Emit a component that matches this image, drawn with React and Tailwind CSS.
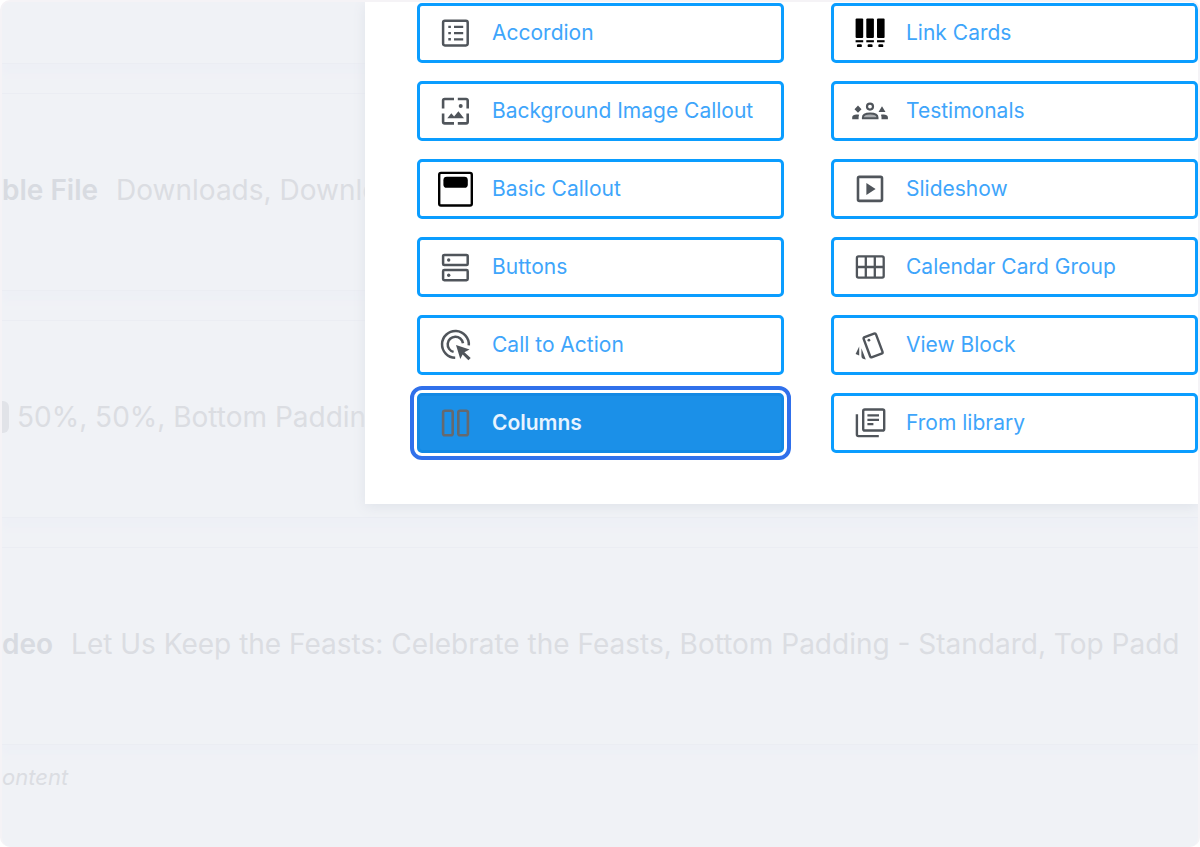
import React, { useState } from "react";

const AccordionIcon = (props) => (
  <svg viewBox="0 0 36 36" fill="none" stroke="currentColor" {...props}>
    <rect x="6.1" y="5.8" width="24.6" height="24.6" rx="1.8" strokeWidth="2.5" />
    <path d="M17 11.9h9.2M17 18.1h9.2M17 24.3h9.2" strokeWidth="2.3" />
    <path d="M11.3 11.9h2.6M11.3 18.1h2.6M11.3 24.3h2.6" strokeWidth="2.4" />
  </svg>
);

const BackgroundImageIcon = (props) => (
  <svg viewBox="0 0 36 36" fill="none" {...props}>
    <path
      d="M6.1 15.4V7.6a1.6 1.6 0 0 1 1.6-1.6H17M20.8 6h8.3a1.6 1.6 0 0 1 1.6 1.6v7.8M30.7 20.4v8.4a1.6 1.6 0 0 1-1.6 1.6h-8.3M17 30.4H7.7a1.6 1.6 0 0 1-1.6-1.6v-8.4"
      stroke="currentColor"
      strokeWidth="2.6"
    />
    <path d="M10.3 25.2l4-5 2.8 3.4 4.3-5.3 5.6 6.9z" fill="currentColor" />
    <circle cx="23.7" cy="13" r="2" fill="currentColor" />
  </svg>
);

const BasicCalloutIcon = (props) => (
  <svg viewBox="0 0 36 36" fill="none" {...props}>
    <rect x="2.2" y="1.9" width="32.6" height="32.6" rx="1.8" stroke="#000" strokeWidth="2.4" />
    <rect x="6.4" y="5.8" width="24.4" height="11" rx="3.4" fill="#000" />
  </svg>
);

const ButtonsIcon = (props) => (
  <svg viewBox="0 0 36 36" fill="none" stroke="currentColor" strokeWidth="2.5" {...props}>
    <rect x="6.1" y="5.9" width="24.6" height="10.2" rx="1.2" />
    <rect x="6.1" y="21.1" width="24.6" height="10.2" rx="1.2" />
    <circle cx="11.7" cy="11" r="1.7" fill="currentColor" stroke="none" />
    <circle cx="11.7" cy="26.2" r="1.7" fill="currentColor" stroke="none" />
  </svg>
);

const CallToActionIcon = (props) => (
  <svg viewBox="0 0 36 36" fill="none" stroke="currentColor" strokeWidth="2.5" {...props}>
    <path d="M31.8 18.4a13.4 13.4 0 1 0-13.6 12.4" />
    <path d="M26 16.2a7.7 7.7 0 1 0-9.4 8.7" />
    <path
      d="M19 18l13.6 4.4-5.2 2.9 6.3 5.8-2.3 2.2-5.8-5.9-2.3 4.6z"
      fill="currentColor"
      stroke="none"
    />
  </svg>
);

const ColumnsIcon = (props) => (
  <svg viewBox="0 0 36 36" fill="none" stroke="currentColor" strokeWidth="2.6" {...props}>
    <rect x="6.1" y="5.8" width="9.6" height="24.4" rx="1.8" />
    <rect x="21.3" y="5.8" width="9.6" height="24.4" rx="1.8" />
  </svg>
);

const LinkCardsIcon = (props) => (
  <svg viewBox="0 0 36 36" fill="#000" {...props}>
    {[4.6, 15.3, 26].map((x) => (
      <g key={x}>
        <rect x={x} y="3.4" width="7.6" height="19.6" rx="1" />
        <rect x={x} y="25.2" width="7.6" height="2.1" />
        <rect x={x + 1.3} y="29.3" width="5" height="2.8" rx="1.2" />
      </g>
    ))}
  </svg>
);

const TestimonialsIcon = (props) => (
  <svg viewBox="0 0 36 36" fill="currentColor" overflow="visible" {...props}>
    <circle cx="19" cy="13.6" r="3" fill="none" stroke="currentColor" strokeWidth="2.2" />
    <path
      d="M11.9 25.3v-.9c0-2.8 3.4-4 7.3-4s7.3 1.2 7.3 4v.9z"
      fill="#a9acb0"
      stroke="currentColor"
      strokeWidth="2"
    />
    <path d="M7 12.6l3.5 3.6L7 19.8l-3.5-3.6zM31 13.2l3.5 5.7h-7z" />
    <path d="M1.2 26.3v-2c0-1.8 2-2.8 4.4-2.8.9 0 1.8.1 2.6.3-.4.7-.6 1.5-.6 2.4v2.1zM36.9 26.3v-2c0-1.8-2-2.8-4.4-2.8-.9 0-1.8.1-2.6.3.4.7.6 1.5.6 2.4v2.1z" />
  </svg>
);

const SlideshowIcon = (props) => (
  <svg viewBox="0 0 36 36" fill="none" stroke="currentColor" strokeWidth="2.6" {...props}>
    <rect x="7" y="5.9" width="24" height="24" rx="1.4" />
    <path d="M15.4 12.1v11.8l9.2-5.9z" fill="currentColor" stroke="none" />
  </svg>
);

const CalendarIcon = (props) => (
  <svg viewBox="0 0 36 36" fill="none" stroke="currentColor" strokeWidth="2.3" {...props}>
    <rect x="5.9" y="7.3" width="26.8" height="21.4" rx="1.6" />
    <path d="M14.8 7.3v21.4M23.8 7.3v21.4M5.9 18h26.8" />
  </svg>
);

const ViewBlockIcon = (props) => (
  <svg viewBox="0 0 36 36" fill="none" stroke="currentColor" strokeWidth="2.4" {...props}>
    <rect x="15.5" y="7.7" width="13.2" height="21.4" rx="1.6" transform="rotate(-20.5 22.1 18.4)" />
    <circle cx="17.9" cy="13.2" r="1.4" fill="currentColor" stroke="none" />
    <path d="M8.2 19.4v9.2l-3.6-1.5zM10.4 21.2l4.4 11.2c-2.9-.1-4.4-1.3-4.4-3.4z" fill="currentColor" stroke="none" />
  </svg>
);

const LibraryIcon = (props) => (
  <svg viewBox="0 0 36 36" fill="none" stroke="currentColor" strokeWidth="2.4" {...props}>
    <rect x="12.2" y="4.5" width="21" height="21" rx="1.6" />
    <path d="M5.9 9.2v20.3a1.6 1.6 0 0 0 1.6 1.6h20.3" />
    <path d="M16.4 10.4H28M16.4 14.8H28M16.4 19.2h6" strokeWidth="2.2" />
  </svg>
);

const BLOCKS = [
  { name: "Accordion", icon: AccordionIcon },
  { name: "Link Cards", icon: LinkCardsIcon },
  { name: "Background Image Callout", icon: BackgroundImageIcon },
  { name: "Testimonals", icon: TestimonialsIcon },
  { name: "Basic Callout", icon: BasicCalloutIcon },
  { name: "Slideshow", icon: SlideshowIcon },
  { name: "Buttons", icon: ButtonsIcon },
  { name: "Calendar Card Group", icon: CalendarIcon },
  { name: "Call to Action", icon: CallToActionIcon },
  { name: "View Block", icon: ViewBlockIcon },
  { name: "Columns", icon: ColumnsIcon },
  { name: "From library", icon: LibraryIcon },
];

const ROW =
  "flex items-center border-y border-[#ebedf3] bg-[#f0f2f6] pt-[78px] pb-[82px] text-[28px] leading-9 whitespace-nowrap shadow-[0_10px_6px_#eef0f6]";

function BlockButton({ block, active, onSelect }) {
  const Icon = block.icon;

  return (
    <button
      type="button"
      onClick={onSelect}
      className={
        active
          ? "flex h-15 items-center gap-[19px] rounded-[5px] border-3 border-[#1389e4] bg-[#1b90e8] px-[17px] text-[21px] font-semibold text-[#e8f4ff] outline-4 outline-offset-3 outline-[#3070eb]"
          : "flex h-15 items-center gap-[19px] rounded-[5px] border-3 border-[#0a9dff] bg-white px-[17px] text-[21px] text-[#3ea5fb]"
      }
    >
      <Icon className={active ? "size-9 shrink-0 text-[#65696f]" : "size-9 shrink-0 text-[#50555b]"} />
      <span className="whitespace-nowrap">{block.name}</span>
    </button>
  );
}

export default function App() {
  const [selected, setSelected] = useState("Columns");

  return (
    <div className="min-h-screen w-full bg-white font-[Inter,sans-serif]">
      <main className="relative min-h-screen overflow-hidden rounded-[10px] border-2 border-b-0 border-[#f5f3f6] bg-[#f0f2f6] text-[#dbdde2]">
        <div className="flex flex-col gap-[29px]">
          <div className="h-[62px] border-b border-[#ebedf3] shadow-[0_10px_6px_#eef0f6]" />

          <div className={ROW}>
            <strong className="font-semibold text-[#d8dbe1]">ble File</strong>
            <span className="ml-[18px]">Downloads, Downloads</span>
          </div>

          <div className={ROW}>
            <span className="mr-2 h-8 w-[7px] rounded-r-md bg-[#e1e3e8]" />
            <span>50%, 50%, Bottom Padding</span>
          </div>

          <div className={ROW}>
            <strong className="font-semibold text-[#d8dbe1]">deo</strong>
            <span className="ml-[18px]">
              Let Us Keep the Feasts: Celebrate the Feasts, Bottom Padding - Standard, Top Padd
            </span>
          </div>
        </div>

        <p className="pt-[14px] text-[22px] leading-9 italic">ontent</p>

        {/* block picker */}
        <section className="absolute top-0 right-0 left-[363px] bg-white pt-px pb-[51px] pl-[52px] shadow-[0_3px_12px_#dfe3ea]">
          <div className="grid grid-cols-2 gap-x-[47px] gap-y-[18px]">
            {BLOCKS.map((block) => (
              <BlockButton
                key={block.name}
                block={block}
                active={selected === block.name}
                onSelect={() => setSelected(block.name)}
              />
            ))}
          </div>
        </section>
      </main>
    </div>
  );
}
